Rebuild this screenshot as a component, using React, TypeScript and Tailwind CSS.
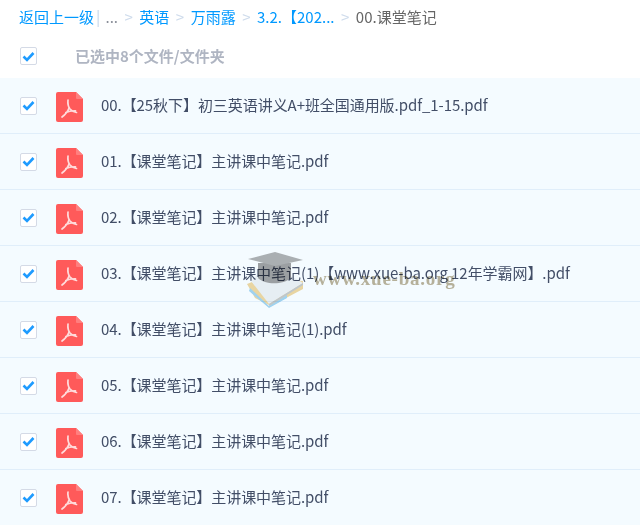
const files = [
  "00.【25秋下】初三英语讲义A+班全国通用版.pdf_1-15.pdf",
  "01.【课堂笔记】主讲课中笔记.pdf",
  "02.【课堂笔记】主讲课中笔记.pdf",
  "03.【课堂笔记】主讲课中笔记(1)【www.xue-ba.org 12年学霸网】.pdf",
  "04.【课堂笔记】主讲课中笔记(1).pdf",
  "05.【课堂笔记】主讲课中笔记.pdf",
  "06.【课堂笔记】主讲课中笔记.pdf",
  "07.【课堂笔记】主讲课中笔记.pdf",
];

const Check = () => (
  <div className="flex h-[18px] w-[17px] shrink-0 items-center justify-center rounded-[2px] border border-[#d4dae6] bg-white">
    <svg width="13" height="11" viewBox="0 0 13 11" fill="none">
      <path d="M1.5 5.5 L5 9 L11.5 2" stroke="#1e9bff" strokeWidth="2.6" />
    </svg>
  </div>
);

const PdfIcon = () => (
  <svg width="27" height="30" viewBox="0 0 27 30" className="shrink-0">
    <path d="M2 0H20L27 7V28a2 2 0 0 1-2 2H2a2 2 0 0 1-2-2V2a2 2 0 0 1 2-2Z" fill="#ff5a5a" />
    <path d="M20 0L27 7H21a1 1 0 0 1-1-1Z" fill="#ff7f7f" />
    <path
      d="M12 8C11.5 12 12.5 15 14 17C15.5 18.8 17.5 19.8 20.5 20.5M13.2 15.5C12 19 9.5 22.5 6 25M9.8 20.5C12.5 19.3 15.5 18.6 19.5 18.8"
      fill="none"
      stroke="#ffdcdc"
      strokeWidth="1.7"
      strokeLinecap="round"
    />
  </svg>
);

const Sep = () => <span className="mx-[6.5px] text-[#cfdcec]">&gt;</span>;

const Watermark = () => (
  <div className="pointer-events-none absolute left-[247px] top-[251px] flex items-start mix-blend-multiply">
    <svg width="60" height="58" viewBox="0 0 60 58">
      <path d="M0 33L5 31L22 50L40 40L45 29L56 30V38L24 55L8 47Z" fill="#f3d9a2" />
      <path d="M3 37L22 55L40 44L40 47L22 57L2 40Z" fill="#a6d6f0" />
      <path d="M4 30L22 53L56 32L44 25L10 24Z" fill="#f1f2f3" />
      <path d="M22 53L56 32L56 34L22 55Z" fill="#c6c9cc" />
      <path d="M11 12V27C18 34 36 34 44 27V12Z" fill="#a2a2a2" />
      <path d="M1 8L28 1L56 9L28 15Z" fill="#b2b2b2" />
    </svg>
    <span className="ml-[6px] mt-[14px] font-['Liberation_Serif',serif] text-[19px] font-bold leading-[28px] tracking-[0.75px] text-[#bdb39a]">
      www.xue-ba.org
    </span>
  </div>
);

export default function App() {
  return (
    <div className="relative h-[525px] w-[640px] overflow-hidden bg-white font-['Noto_Sans_CJK_SC',sans-serif] text-[15px]">
      <div className="flex h-[34px] items-center whitespace-nowrap pl-[19px] text-[#09f]">
        <span>返回上一级</span>
        <span className="ml-[2px] font-bold text-[#d5e2f0]">|</span>
        <span className="ml-[5px] text-[#8a8f99]">...</span>
        <Sep />
        <span>英语</span>
        <Sep />
        <span>万雨露</span>
        <Sep />
        <span>3.2.【202...</span>
        <Sep />
        <span className="text-[#666]">00.课堂笔记</span>
      </div>
      <div className="flex h-[44px] items-center pl-[20px]">
        <Check />
        <span className="ml-[38px] font-bold text-[#afb5c2]">已选中8个文件/文件夹</span>
      </div>
      <ul>
        {files.map((name) => (
          <li
            key={name}
            className="flex h-[56px] items-center border-b border-[#e0eefa] bg-[#f4fbff] pl-[20px]"
          >
            <Check />
            <div className="ml-[19px] mt-[2px]">
              <PdfIcon />
            </div>
            <span className="ml-[18px] whitespace-nowrap tracking-[-0.06px] text-[#424e67]">{name}</span>
          </li>
        ))}
      </ul>
      <Watermark />
    </div>
  );
}
